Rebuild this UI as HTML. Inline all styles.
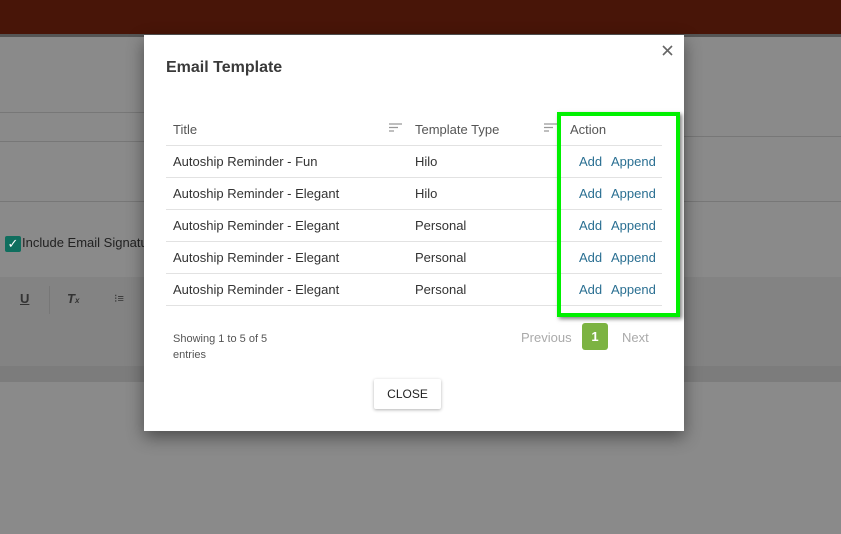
<!DOCTYPE html>
<html><head><style>
*{margin:0;padding:0;box-sizing:border-box}
body{width:841px;height:534px;position:relative;overflow:hidden;background:#8a8a8a;font-family:"Liberation Sans",sans-serif}
.hdr{position:absolute;left:0;top:0;width:841px;height:34px;background:#481508}
.a{position:absolute}
.m{position:absolute;left:144px;top:35px;width:540px;height:396px;background:#fff;box-shadow:0 6px 16px rgba(0,0,0,.45)}
.t{position:absolute;font-size:13px;color:#333}
.ln{position:absolute;left:22px;width:496px;height:1px;background:#e2e2e2}
.lk{color:#2a6f92}
</style></head><body>
<div class="hdr"></div>
<div class="a" style="left:0;top:34px;width:841px;height:3px;background:#555"></div>
<div class="a" style="left:0;top:112px;width:144px;height:1px;background:#777"></div>
<div class="a" style="left:0;top:141px;width:144px;height:1px;background:#777"></div>
<div class="a" style="left:0;top:201px;width:144px;height:1px;background:#777"></div>
<div class="a" style="left:684px;top:136px;width:157px;height:1px;background:#777"></div>
<div class="a" style="left:684px;top:201px;width:157px;height:1px;background:#777"></div>
<div class="a" style="left:0;top:277px;width:841px;height:89px;background:#838383"></div>
<div class="a" style="left:0;top:366px;width:841px;height:16px;background:#7c7c7c"></div>
<div class="a" style="left:5px;top:236px;width:16px;height:16px;background:#0f6e5e;border-radius:2px;color:#fff;font-size:13px;line-height:16px;text-align:center">✓</div>
<div class="a" style="left:22px;top:235px;font-size:13px;color:#222">Include Email Signatur</div>
<div class="a" style="left:20px;top:291px;font-size:13px;font-weight:bold;text-decoration:underline;color:#333">U</div>
<div class="a" style="left:49px;top:286px;width:1px;height:28px;background:#777"></div>
<div class="a" style="left:67px;top:291px;font-size:13px;font-weight:bold;font-style:italic;color:#333">T<span style="font-size:8px">x</span></div>
<div class="a" style="left:114px;top:292px;font-size:11px;color:#333">⁝≡</div>
<div class="m">
<div class="t" style="left:22px;top:24px;font-size:16px;font-weight:bold;color:#3a3a3a">Email Template</div>
<svg class="a" style="left:518px;top:10px" width="11" height="11"><path d="M1 1L10 10M10 1L1 10" stroke="#666" stroke-width="1.6"/></svg>
<div class="t" style="left:29px;top:87px;color:#555">Title</div>
<svg class="a" style="left:245px;top:88px" width="13" height="9"><path d="M0 1H13M0 4.5H9M0 8H5" stroke="#999" stroke-width="1.3"/></svg>
<div class="t" style="left:271px;top:87px;color:#555">Template Type</div>
<svg class="a" style="left:400px;top:88px" width="13" height="9"><path d="M0 1H13M0 4.5H9M0 8H5" stroke="#999" stroke-width="1.3"/></svg>
<div class="t" style="left:426px;top:87px;color:#555">Action</div>
<div class="ln" style="top:110px"></div>
<div class="t" style="left:29px;top:119px">Autoship Reminder - Fun</div><div class="t" style="left:271px;top:119px">Hilo</div>
<div class="ln" style="top:142px"></div>
<div class="t" style="left:29px;top:151px">Autoship Reminder - Elegant</div><div class="t" style="left:271px;top:151px">Hilo</div>
<div class="ln" style="top:174px"></div>
<div class="t" style="left:29px;top:183px">Autoship Reminder - Elegant</div><div class="t" style="left:271px;top:183px">Personal</div>
<div class="ln" style="top:206px"></div>
<div class="t" style="left:29px;top:215px">Autoship Reminder - Elegant</div><div class="t" style="left:271px;top:215px">Personal</div>
<div class="ln" style="top:238px"></div>
<div class="t" style="left:29px;top:247px">Autoship Reminder - Elegant</div><div class="t" style="left:271px;top:247px">Personal</div>
<div class="ln" style="top:270px"></div>
<div class="t lk" style="left:435px;top:119px">Add</div><div class="t lk" style="left:467px;top:119px">Append</div>
<div class="t lk" style="left:435px;top:151px">Add</div><div class="t lk" style="left:467px;top:151px">Append</div>
<div class="t lk" style="left:435px;top:183px">Add</div><div class="t lk" style="left:467px;top:183px">Append</div>
<div class="t lk" style="left:435px;top:215px">Add</div><div class="t lk" style="left:467px;top:215px">Append</div>
<div class="t lk" style="left:435px;top:247px">Add</div><div class="t lk" style="left:467px;top:247px">Append</div>
<div class="a" style="left:413px;top:77px;width:123px;height:205px;border:4px solid #00f000;box-shadow:2px 2px 4px rgba(0,0,0,.5)"></div>
<div class="t" style="left:29px;top:296px;font-size:11px;line-height:16px;color:#555">Showing 1 to 5 of 5<br>entries</div>
<div class="t" style="left:377px;top:295px;color:#aaa">Previous</div>
<div class="a" style="left:438px;top:288px;width:26px;height:27px;background:#7cb342;border-radius:3px;color:#fff;font-size:13px;font-weight:bold;text-align:center;line-height:27px">1</div>
<div class="t" style="left:478px;top:295px;color:#aaa">Next</div>
<div class="a" style="left:230px;top:344px;width:67px;height:30px;background:#fff;box-shadow:0 1px 3px rgba(0,0,0,.3);border-radius:2px;font-size:12px;color:#222;text-align:center;line-height:30px">CLOSE</div>
</div>
</body></html>
